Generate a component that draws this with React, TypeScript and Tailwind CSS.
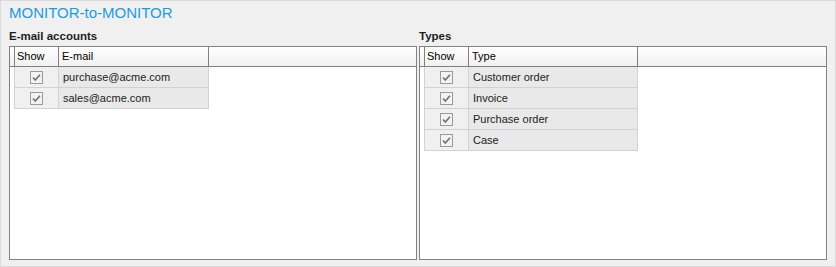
import React from "react";

const font = { fontFamily: '"Liberation Sans", Arial, sans-serif' };

function Check() {
  return (
    <svg width="13" height="13" viewBox="0 0 13 13" className="block">
      <rect x="0.5" y="0.5" width="12" height="12" fill="#f3f3f3" stroke="#9a9a9a" />
      <polyline points="3,6.5 5.3,9 10,3.8" fill="none" stroke="#707070" strokeWidth="1.6" />
    </svg>
  );
}

function Grid({ col2, rows, w2 }: { col2: string; rows: string[]; w2: string }) {
  return (
    <div className="h-[214px] border border-[#828282] bg-white flex flex-col">
      <div className="flex h-[20px] border-b border-[#808080] bg-gradient-to-b from-white to-[#f1f1f1] text-[11px] text-black">
        <div className="w-[4px]" />
        <div className="w-[44px] border-l border-[#808080] pl-[2px] leading-[19px]">Show</div>
        <div className={`${w2} border-l border-[#808080] pl-[3px] leading-[19px]`}>{col2}</div>
        <div className="flex-1 border-l border-[#808080]" />
      </div>
      <div className="flex flex-col pl-[4px]">
        {rows.map((r) => (
          <div key={r} className="flex h-[21px] self-start border-l border-r border-b border-[#d2d2d2] text-[11px] text-[#222]">
            <div className="w-[44px] border-r border-[#d2d2d2] bg-[#f0f0f0] flex items-center justify-center">
              <Check />
            </div>
            <div className={`${w2 === "w-[150px]" ? "w-[149px]" : "w-[168px]"} bg-[#e9e9e9] pl-[4px] leading-[20px]`}>{r}</div>
          </div>
        ))}
      </div>
    </div>
  );
}

export default function App() {
  return (
    <div style={font} className="w-[836px] h-[267px] bg-[#f0f0f0] border border-[#dadada] box-border pl-[8px] pr-[8px]">
      <div className="text-[15px] leading-[18px] text-[#1a9ddf] pt-[3px]">MONITOR-to-MONITOR</div>
      <div className="flex gap-[2px] mt-[8px]">
        <div className="w-[408px] flex flex-col">
          <div className="text-[11.5px] font-bold text-[#1e1e1e] leading-[13px] mb-[3px]">E-mail accounts</div>
          <Grid col2="E-mail" w2="w-[150px]" rows={["purchase@acme.com", "sales@acme.com"]} />
        </div>
        <div className="w-[408px] flex flex-col">
          <div className="text-[11.5px] font-bold text-[#1e1e1e] leading-[13px] mb-[3px]">Types</div>
          <Grid col2="Type" w2="w-[169px]" rows={["Customer order", "Invoice", "Purchase order", "Case"]} />
        </div>
      </div>
    </div>
  );
}
